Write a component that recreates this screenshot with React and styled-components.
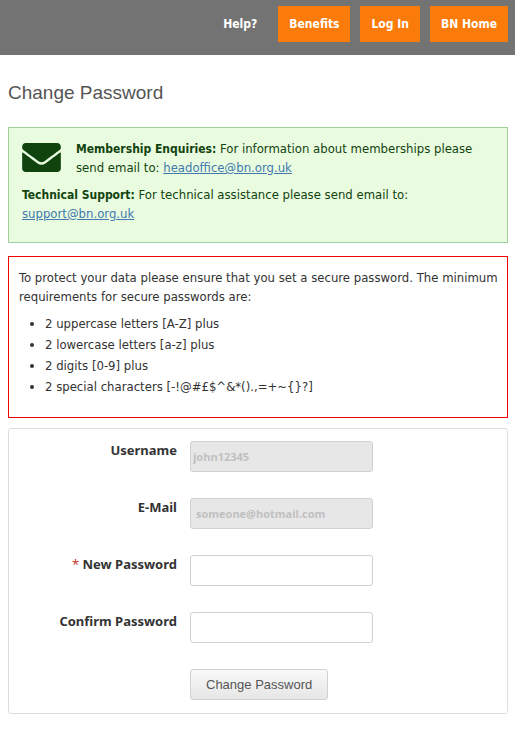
import React from "react";
import styled, { createGlobalStyle } from "styled-components";

const bodyFont = `"DejaVu Sans Condensed", "Noto Sans", sans-serif`;
const labelFont = `"Noto Sans", "Open Sans", sans-serif`;
const headingFont = `"Liberation Sans", Arial, sans-serif`;

const GlobalStyle = createGlobalStyle`
  *, *::before, *::after {
    box-sizing: border-box;
  }
  body {
    margin: 0;
    background: #ffffff;
    color: #333333;
    font-family: ${bodyFont};
    font-size: 13px;
    line-height: 19px;
  }
`;

const Header = styled.header`
  background-color: #737373;
  padding: 6px 7px 13px;
`;

const Nav = styled.nav`
  display: flex;
  justify-content: flex-end;
  gap: 10px;
`;

const NavLink = styled.a`
  padding: 0 11px;
  background-color: ${props => (props.$plain ? "transparent" : "#fb7b0a")};
  font-size: 12px;
  font-weight: 700;
  line-height: 36px;
  color: #ffffff;
  text-decoration: none;
`;

const Main = styled.main`
  padding: 26px 7px 16px 8px;
`;

const Title = styled.h1`
  margin: 0 0 22px;
  font-family: ${headingFont};
  font-size: 19px;
  font-weight: 400;
  line-height: 24px;
  color: #555555;
`;

const InfoBox = styled.section`
  padding: 11px 13px 19px;
  border: 1px solid #a0cf9c;
  background-color: #eafcdf;
  color: #11430f;
  strong {
    font-size: 12px;
    line-height: 1;
  }
  a {
    color: #4179ae;
  }
`;

const Enquiries = styled.div`
  display: flex;
  gap: 15px;
  margin-bottom: 8px;
`;

const Envelope = styled.svg`
  flex: none;
  width: 39px;
  height: 29px;
  margin-top: 4px;
  fill: #11430f;
`;

const Text = styled.p`
  margin: 0;
`;

const WarningBox = styled.section`
  margin: 13px 0 10px;
  padding: 11px 6px 20px 10px;
  border: 1px solid #f60000;
`;

const Rules = styled.ul`
  margin: 7px 0 0;
  padding: 0 0 0 26px;
  line-height: 21px;
`;

const Form = styled.form`
  display: flex;
  flex-direction: column;
  gap: 26px;
  padding: 12px 12px 13px;
  border: 1px solid #dddddd;
  border-radius: 3px;
`;

const Row = styled.div`
  display: grid;
  grid-template-columns: 156px 1fr;
  column-gap: 13px;
  align-items: start;
`;

const Label = styled.label`
  font-family: ${labelFont};
  font-weight: 700;
  line-height: 18px;
  text-align: right;
  span {
    font-weight: 400;
    color: #c0392b;
  }
`;

const Input = styled.input`
  width: 183px;
  max-width: 100%;
  height: 31px;
  padding: 0 ${props => props.$pad || 5}px;
  border: 1px solid #cdd1d8;
  border-radius: 3px;
  background-color: #ffffff;
  font-family: "Open Sans", "Noto Sans", sans-serif;
  font-size: 11px;
  font-weight: 700;
  color: #333333;
  &:disabled {
    background-color: #e7e7e7;
    color: #c0c0c0;
  }
`;

const SubmitButton = styled.button`
  grid-column: 2;
  justify-self: start;
  height: 31px;
  padding: 0 15px;
  border: 1px solid #cdd1d8;
  border-radius: 3px;
  background: linear-gradient(#f9f9f9, #e6e6e6);
  font-family: ${headingFont};
  font-size: 13px;
  color: #555555;
  cursor: pointer;
`;

const App = () => {
  return (
    <>
      <GlobalStyle />
      <Header>
        <Nav>
          <NavLink href="#help" $plain>
            Help?
          </NavLink>
          <NavLink href="#benefits">Benefits</NavLink>
          <NavLink href="#login">Log In</NavLink>
          <NavLink href="#home">BN Home</NavLink>
        </Nav>
      </Header>
      <Main>
        <Title>Change Password</Title>
        <InfoBox>
          <Enquiries>
            <Envelope viewBox="0 64 512 384" aria-hidden="true">
              <path d="M502.3 190.8c3.9-3.1 9.7-.2 9.7 4.7V400c0 26.5-21.5 48-48 48H48c-26.5 0-48-21.5-48-48V195.600c0-5 5.700-7.800 9.700-4.700 22.400 17.400 52.100 39.500 154.100 113.600 21.100 15.400 56.700 47.800 92.200 47.600 35.700.3 72-32.800 92.300-47.600 102-74.100 131.600-96.300 154-113.700zM256 320c23.200.4 56.600-29.200 73.400-41.400 132.700-96.300 142.800-104.700 173.400-128.700 5.800-4.500 9.200-11.500 9.200-18.900v-19c0-26.500-21.500-48-48-48H48c-26.500 0-48 21.500-48 48v19c0 7.400 3.400 14.300 9.200 18.900 30.600 23.900 40.700 32.400 173.400 128.700 16.800 12.200 50.200 41.800 73.400 41.400z" />
            </Envelope>
            <Text>
              <strong>Membership Enquiries:</strong> For information about
              memberships please send email to:{" "}
              <a href="mailto:headoffice@bn.org.uk">headoffice@bn.org.uk</a>
            </Text>
          </Enquiries>
          <Text>
            <strong>Technical Support:</strong> For technical assistance please
            send email to:{" "}
            <a href="mailto:support@bn.org.uk">support@bn.org.uk</a>
          </Text>
        </InfoBox>
        <WarningBox>
          <Text>
            To protect your data please ensure that you set a secure password.
            The minimum requirements for secure passwords are:
          </Text>
          <Rules>
            <li>2 uppercase letters [A-Z] plus</li>
            <li>2 lowercase letters [a-z] plus</li>
            <li>2 digits [0-9] plus</li>
            <li>{"2 special characters [-!@#£$^&*().,=+~{}?]"}</li>
          </Rules>
        </WarningBox>
        <Form onSubmit={e => e.preventDefault()}>
          <Row>
            <Label htmlFor="username">Username</Label>
            <Input id="username" defaultValue="john12345" $pad={2} disabled />
          </Row>
          <Row>
            <Label htmlFor="email">E-Mail</Label>
            <Input id="email" defaultValue="someone@hotmail.com" disabled />
          </Row>
          <Row>
            <Label htmlFor="newPassword">
              <span>*</span> New Password
            </Label>
            <Input id="newPassword" type="password" required />
          </Row>
          <Row>
            <Label htmlFor="confirmPassword">Confirm Password</Label>
            <Input id="confirmPassword" type="password" />
          </Row>
          <Row>
            <SubmitButton type="submit">Change Password</SubmitButton>
          </Row>
        </Form>
      </Main>
    </>
  );
};

export default App;
